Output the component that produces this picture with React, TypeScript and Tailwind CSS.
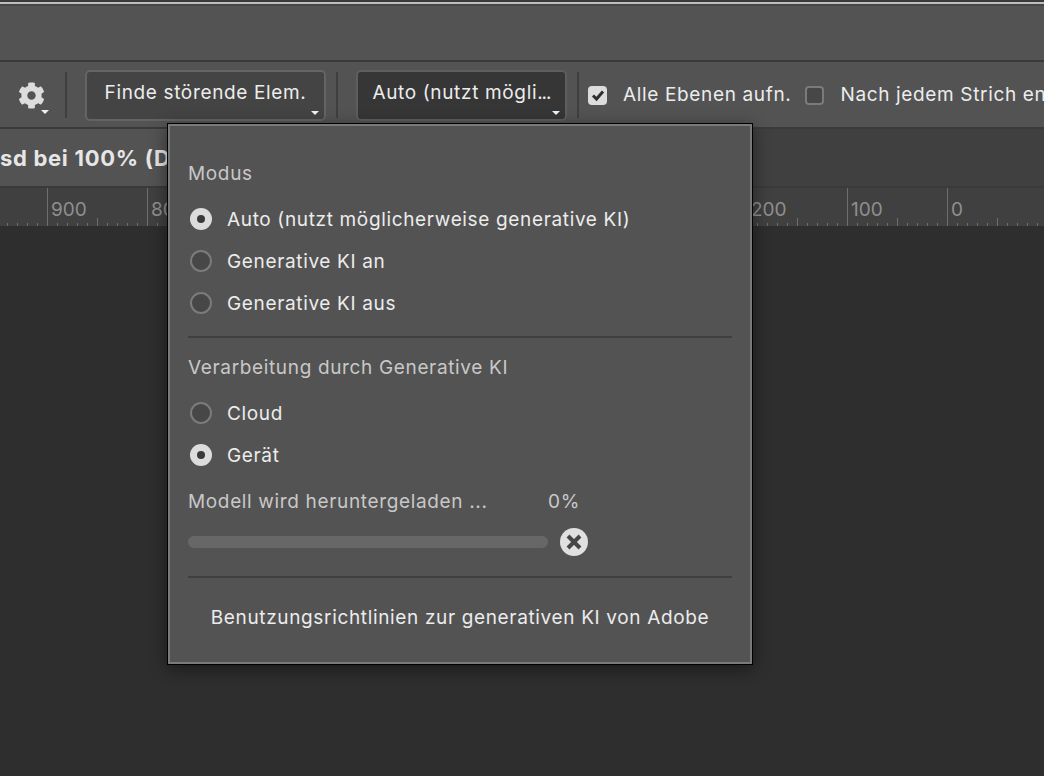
import { FaCog } from "react-icons/fa";

const rulerMarks = ["1000", "900", "800", "700", "600", "500", "400", "300", "200", "100", "0"];

function Caret({ className = "right-[5px]" }: { className?: string }) {
  return <span className={`absolute bottom-[4px] h-0 w-0 border-x-[4px] border-t-[4px] border-x-transparent border-t-[#f0f0f0] ${className}`} />;
}

function Divider() {
  return <div className="h-[46px] w-[2px] shrink-0 bg-[#3f3f3f]" />;
}

function Radio({ label, checked = false }: { label: string; checked?: boolean }) {
  return (
    <div className="ml-[2px] flex h-[42px] items-center gap-[15px]">
      {checked ? (
        <span className="flex h-[22px] w-[22px] items-center justify-center rounded-full bg-[#dcdcdc]">
          <span className="h-[8px] w-[8px] rounded-full bg-[#3a3a3a]" />
        </span>
      ) : (
        <span className="h-[22px] w-[22px] rounded-full border-2 border-[#7b7b7b] bg-[#474747]" />
      )}
      <span className="pt-[2px] text-[#ececec]">{label}</span>
    </div>
  );
}

function RulerCell({ mark }: { mark: string }) {
  return (
    <div className="relative h-full w-[100px] shrink-0 border-l border-[#6e6e6e] pl-[3px] pt-[9px] text-[19px] leading-[26px] tracking-normal text-[#8f8f8f]">
      {mark}
      <svg className="absolute bottom-0 left-0" width="100" height="8" viewBox="0 0 100 8">
        {[10, 20, 30, 40, 50, 60, 70, 80, 90].map((x) => (
          <line key={x} x1={x - 0.5} x2={x - 0.5} y1={x === 50 ? 0 : 5} y2="8" stroke="#6e6e6e" strokeWidth="1" />
        ))}
      </svg>
    </div>
  );
}

export default function App() {
  return (
    <div className="relative h-[776px] w-[1044px] overflow-hidden bg-[#2e2e2e] text-[19px] tracking-[0.65px] [font-family:Inter,'Liberation_Sans',sans-serif]">
      <div className="h-[2px] bg-[#3a3a3a]" />
      <div className="h-[2px] bg-[#bdbdbd]" />

      {/* title bar */}
      <div className="h-[58px] border-b-2 border-t-2 border-b-[#3a3a3a] border-t-[#464646] bg-[#535353]" />

      {/* options bar */}
      <div className="flex h-[67px] items-center whitespace-nowrap border-b-2 border-[#3a3a3a] bg-[#535353] pt-[1px] text-[#ececec]">
        <div className="relative ml-[18px] flex h-[46px] w-[33px] shrink-0 items-center">
          <FaCog className="text-[27px] text-[#dcdcdc]" />
          <Caret className="right-[2px]" />
        </div>
        <div className="ml-[14px]">
          <Divider />
        </div>
        <div className="relative ml-[18px] flex h-[51px] w-[241px] shrink-0 items-center justify-center rounded-[5px] border-2 border-[#646464] bg-[#444444] pb-[3px]">
          Finde störende Elem.
          <Caret />
        </div>
        <div className="ml-[10px]">
          <Divider />
        </div>
        <div className="relative ml-[18px] flex h-[51px] w-[211px] shrink-0 items-center justify-center rounded-[5px] border-2 border-[#5e5e5e] bg-[#363636] pb-[3px]">
          <span>
            Auto (nutzt mögli<span className="tracking-[-1px]">...</span>
          </span>
          <Caret />
        </div>
        <div className="ml-[10px]">
          <Divider />
        </div>
        <span className="ml-[9px] flex h-[19px] w-[19px] shrink-0 items-center justify-center rounded-[4px] bg-[#dcdcdc]">
          <svg width="14" height="14" viewBox="0 0 14 14">
            <path d="M2 7.5 L5.5 11 L12 3.5" fill="none" stroke="#2e2e2e" strokeWidth="3" />
          </svg>
        </span>
        <span className="ml-[16px] shrink-0 pt-[1px]">Alle Ebenen aufn.</span>
        <span className="ml-[14px] h-[19px] w-[19px] shrink-0 rounded-[4px] border-2 border-[#7b7b7b] bg-[#474747]" />
        <span className="ml-[16px] shrink-0 pt-[1px]">Nach jedem Strich entfernen</span>
      </div>

      {/* tab row */}
      <div className="flex h-[59px] border-b-2 border-[#3a3a3a] bg-[#404040]">
        <div className="flex w-[400px] items-center whitespace-nowrap bg-[#535353] pt-[1px] text-[22px] font-bold tracking-[0.7px] text-[#e6e6e6]">
          sd bei 100% (D
        </div>
      </div>

      {/* ruler */}
      <div className="-ml-[53px] flex h-[38px] w-[1200px] bg-[#404040]">
        {rulerMarks.map((mark) => (
          <RulerCell key={mark} mark={mark} />
        ))}
      </div>

      {/* popup */}
      <div className="absolute left-[167px] top-[123px] h-[542px] w-[586px] border border-black bg-[#535353] shadow-[0_4px_16px_rgba(0,0,0,0.45)]">
        <div className="h-full border-2 border-[#7a7a7a] px-[18px] pt-[34px]">
          <div className="mb-[10px] leading-[28px] text-[#c8c8c8]">Modus</div>
          <Radio label="Auto (nutzt möglicherweise generative KI)" checked />
          <Radio label="Generative KI an" />
          <Radio label="Generative KI aus" />
          <div className="mt-[12px] h-[2px] bg-[#3f3f3f]" />
          <div className="mb-[10px] mt-[16px] leading-[28px] text-[#c8c8c8]">Verarbeitung durch Generative KI</div>
          <Radio label="Cloud" />
          <Radio label="Gerät" checked />
          <div className="mt-[12px] flex leading-[28px] text-[#c8c8c8]">
            <span className="w-[360px]">Modell wird heruntergeladen ...</span>
            <span>0%</span>
          </div>
          <div className="mt-[12px] flex items-center gap-[12px]">
            <div className="h-[12px] w-[360px] rounded-full bg-[#676767]" />
            <svg width="28" height="28" viewBox="0 0 28 28">
              <circle cx="14" cy="14" r="14" fill="#e0e0e0" />
              <path d="M8 8 L20 20 M20 8 L8 20" stroke="#464646" strokeWidth="4" />
            </svg>
          </div>
          <div className="mt-[20px] h-[2px] bg-[#3f3f3f]" />
          <div className="mt-[26px] text-center leading-[28px] text-[#ececec]">Benutzungsrichtlinien zur generativen KI von Adobe</div>
        </div>
      </div>
    </div>
  );
}
